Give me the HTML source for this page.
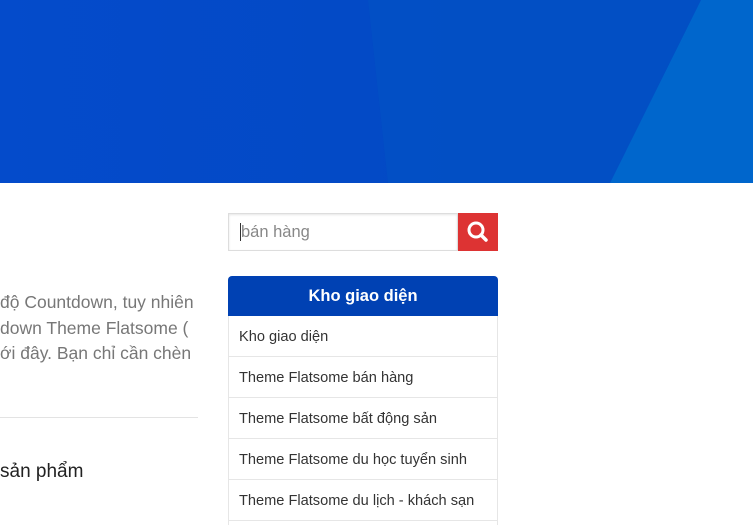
<!DOCTYPE html>
<html><head><meta charset="utf-8"><style>
html,body{margin:0;width:753px;height:525px;overflow:hidden}
body{background:#fff;font-family:"Liberation Sans",sans-serif;position:relative}
.ban{position:absolute;left:0;top:0;width:753px;height:183px;background:linear-gradient(90deg,#044bcb,#0248c0)}
.txt{position:absolute;left:0;color:#777;font-size:17.5px;white-space:nowrap}
.li{position:absolute;left:228px;width:270px;height:41px;border:1px solid #e6e6e6;border-top:none;font-size:14.6px;color:#333;line-height:43px;padding-left:10px;box-sizing:border-box}
</style></head><body>
<div class="ban"><svg width="753" height="183" style="position:absolute;left:0;top:0">
<polygon points="368,0 701,0 610,183 388,183" fill="#0250c4" opacity="0.9"/>
<polygon points="701,0 753,0 753,183 610,183" fill="#0066cc"/></svg></div>
<div class="txt" style="top:292px">độ Countdown, tuy nhiên</div>
<div class="txt" style="top:318px">down Theme Flatsome (</div>
<div class="txt" style="top:343px">ới đây. Bạn chỉ cần chèn</div>
<div style="position:absolute;left:0;top:417px;width:198px;height:1px;background:#e3e3e3"></div>
<div style="position:absolute;left:0;top:461px;font-size:19px;color:#222">sản phẩm</div>
<div style="position:absolute;left:228px;top:213px;width:230px;height:38px;border:1px solid #ddd;box-sizing:border-box;box-shadow:inset 0 1px 2px rgba(0,0,0,.1);font-size:16.5px;color:#888;line-height:37px;padding-left:11px"><span style="border-left:1px solid #333">bán hàng</span></div>
<div style="position:absolute;left:458px;top:213px;width:40px;height:38px;background:#dd3333"><svg width="40" height="38"><circle cx="18" cy="17" r="7" fill="none" stroke="#fff" stroke-width="3"/><line x1="23" y1="22" x2="28" y2="27" stroke="#fff" stroke-width="3.5" stroke-linecap="round"/></svg></div>
<div style="position:absolute;left:228px;top:276px;width:270px;height:40px;background:#0041b3;border-radius:4px 4px 0 0;color:#fff;font-weight:bold;font-size:16.5px;text-align:center;line-height:40px">Kho giao diện</div>
<div class="li" style="top:316px">Kho giao diện</div>
<div class="li" style="top:357px">Theme Flatsome bán hàng</div>
<div class="li" style="top:398px">Theme Flatsome bất động sản</div>
<div class="li" style="top:439px">Theme Flatsome du học tuyển sinh</div>
<div class="li" style="top:480px">Theme Flatsome du lịch - khách sạn</div>
<div class="li" style="top:521px;height:4px;border-bottom:none"></div>
</body></html>
